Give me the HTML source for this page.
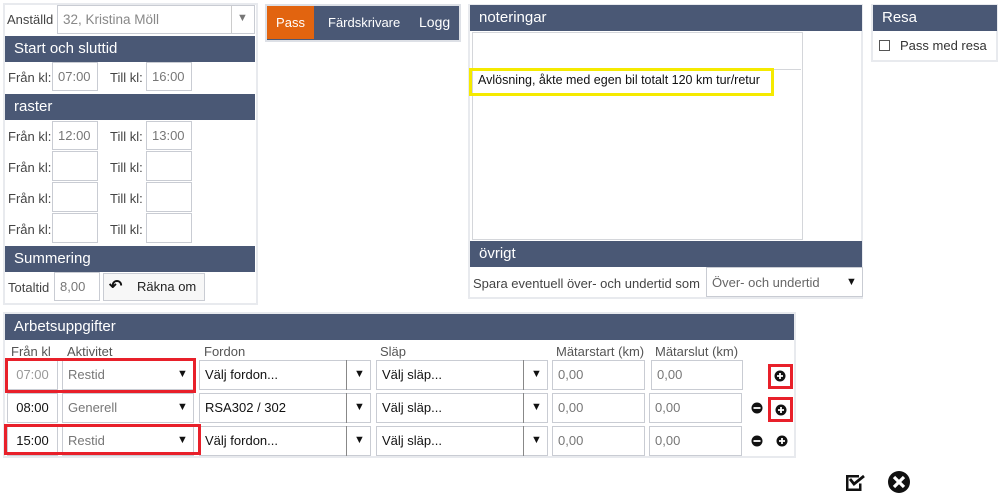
<!DOCTYPE html>
<html><head><meta charset="utf-8"><style>
*{box-sizing:border-box;margin:0;padding:0}
body{width:999px;height:498px;background:#fff;font-family:"Liberation Sans",sans-serif;font-size:13px;color:#333;position:relative;overflow:hidden}
.a{position:absolute}
.hd{position:absolute;background:#4a5875;color:#fff;font-size:15px;padding-left:9px;line-height:26px}
.pan{position:absolute;border:2px solid #e8eaee;background:#fff}
.in{position:absolute;border:1px solid #c9ccd3;background:#fff;color:#777;font-size:13px;line-height:28px;padding-left:5px}
.lb{position:absolute;font-size:13px;color:#444}
.sel{position:absolute;border:1px solid #c9ccd3;background:#fff;font-size:13px;padding-left:5px}
.ar{position:absolute;font-size:11px;color:#111}
.red{position:absolute;border:3px solid #e8202a}
</style></head><body>
<div class="pan" style="left:3px;top:3px;width:255px;height:302px"></div>
<div class="lb" style="left:7px;top:12px;font-size:13px">Anställd</div>
<div class="sel" style="left:57px;top:5px;width:198px;height:29px;line-height:28px;color:#888;font-size:13.5px">32, Kristina Möll</div>
<div class="a" style="left:231px;top:6px;width:1px;height:27px;background:#ccc"></div>
<div class="ar" style="left:237px;top:12px;color:#777">▼</div>
<div class="hd" style="left:5px;top:36px;width:250px">Start och sluttid</div>
<div class="lb" style="left:8px;top:70px">Från kl:</div><div class="in" style="left:52px;top:62px;width:46px;height:29px">07:00</div>
<div class="lb" style="left:110px;top:70px">Till kl:</div><div class="in" style="left:146px;top:62px;width:46px;height:29px">16:00</div>
<div class="hd" style="left:5px;top:94px;width:250px">raster</div>
<div class="lb" style="left:8px;top:129px">Från kl:</div><div class="in" style="left:52px;top:121px;width:46px;height:29px">12:00</div>
<div class="lb" style="left:110px;top:129px">Till kl:</div><div class="in" style="left:146px;top:121px;width:46px;height:29px">13:00</div>
<div class="lb" style="left:8px;top:160px">Från kl:</div><div class="in" style="left:52px;top:151px;width:46px;height:30px"></div>
<div class="lb" style="left:110px;top:160px">Till kl:</div><div class="in" style="left:146px;top:151px;width:46px;height:30px"></div>
<div class="lb" style="left:8px;top:191px">Från kl:</div><div class="in" style="left:52px;top:182px;width:46px;height:30px"></div>
<div class="lb" style="left:110px;top:191px">Till kl:</div><div class="in" style="left:146px;top:182px;width:46px;height:30px"></div>
<div class="lb" style="left:8px;top:222px">Från kl:</div><div class="in" style="left:52px;top:213px;width:46px;height:30px"></div>
<div class="lb" style="left:110px;top:222px">Till kl:</div><div class="in" style="left:146px;top:213px;width:46px;height:30px"></div>
<div class="hd" style="left:5px;top:246px;width:250px">Summering</div>
<div class="lb" style="left:8px;top:280px">Totaltid</div><div class="in" style="left:54px;top:272px;width:46px;height:29px">8,00</div>
<div class="a" style="left:103px;top:273px;width:102px;height:28px;border:1px solid #c9ccd3;background:#f7f7f7;line-height:26px;font-size:13px;color:#222;padding-left:33px">Räkna om</div>
<div class="a" style="left:109px;top:279px;font-size:16px;font-weight:bold;color:#111;line-height:16px">↶</div>
<div class="a" style="left:265px;top:4px;width:196px;height:38px;background:#4a5875;border:2px solid #dde0e6"></div>
<div class="a" style="left:267px;top:6px;width:47px;height:33px;background:#e2640f;color:#fff;line-height:33px;text-align:center">Pass</div>
<div class="a" style="left:328px;top:6px;line-height:33px;color:#fff">Färdskrivare</div>
<div class="a" style="left:419px;top:6px;line-height:33px;color:#fff;font-size:14px">Logg</div>
<div class="pan" style="left:468px;top:4px;width:395px;height:295px"></div>
<div class="hd" style="left:470px;top:5px;width:392px">noteringar</div>
<div class="a" style="left:472px;top:32px;width:331px;height:208px;border:1px solid #d4d6da"></div>
<div class="a" style="left:474px;top:34px;width:327px;height:36px;border-bottom:1px solid #d4d6da"></div>
<div class="a" style="left:469px;top:68px;width:305px;height:28px;border:3px solid #f5ea00"></div>
<div class="a" style="left:478px;top:73px;font-size:12.5px;color:#111">Avlösning, åkte med egen bil totalt 120 km tur/retur</div>
<div class="hd" style="left:470px;top:241px;width:392px">övrigt</div>
<div class="lb" style="left:473px;top:276px">Spara eventuell över- och undertid som</div>
<div class="sel" style="left:706px;top:267px;width:157px;height:30px;line-height:29px;color:#666">Över- och undertid</div>
<div class="ar" style="left:846px;top:276px">▼</div>
<div class="pan" style="left:871px;top:4px;width:127px;height:58px"></div>
<div class="hd" style="left:873px;top:5px;width:124px">Resa</div>
<div class="a" style="left:879px;top:40px;width:11px;height:11px;border:1.5px solid #555"></div>
<div class="lb" style="left:900px;top:38px;color:#333">Pass med resa</div>
<div class="pan" style="left:3px;top:312px;width:793px;height:146px"></div>
<div class="hd" style="left:5px;top:314px;width:789px">Arbetsuppgifter</div>
<div class="lb" style="left:11px;top:344px;color:#555">Från kl</div>
<div class="lb" style="left:67px;top:344px;color:#555">Aktivitet</div>
<div class="lb" style="left:204px;top:344px;color:#555">Fordon</div>
<div class="lb" style="left:380px;top:344px;color:#555">Släp</div>
<div class="lb" style="left:556px;top:344px;color:#555">Mätarstart (km)</div>
<div class="lb" style="left:655px;top:344px;color:#555">Mätarslut (km)</div>
<div class="in" style="left:7px;top:360px;width:51px;height:30px;text-align:center;padding:0;color:#999">07:00</div>
<div class="in" style="left:7px;top:393px;width:51px;height:30px;text-align:center;padding:0;color:#111">08:00</div>
<div class="in" style="left:7px;top:426px;width:51px;height:30px;text-align:center;padding:0;color:#111">15:00</div>
<div class="in" style="left:62px;top:360px;width:132px;height:30px">Restid</div><div class="ar" style="left:177px;top:368px">▼</div>
<div class="in" style="left:62px;top:393px;width:132px;height:30px">Generell</div><div class="ar" style="left:177px;top:401px">▼</div>
<div class="in" style="left:62px;top:426px;width:132px;height:30px">Restid</div><div class="ar" style="left:177px;top:434px">▼</div>
<div class="in" style="left:199px;top:360px;width:172px;height:30px;color:#111">Välj fordon...</div><div class="a" style="left:346px;top:360px;width:1px;height:30px;background:#888"></div><div class="ar" style="left:354px;top:368px">▼</div>
<div class="in" style="left:199px;top:393px;width:172px;height:30px;color:#111">RSA302 / 302</div><div class="a" style="left:346px;top:393px;width:1px;height:30px;background:#888"></div><div class="ar" style="left:354px;top:401px">▼</div>
<div class="in" style="left:199px;top:426px;width:172px;height:30px;color:#111">Välj fordon...</div><div class="a" style="left:346px;top:426px;width:1px;height:30px;background:#888"></div><div class="ar" style="left:354px;top:434px">▼</div>
<div class="in" style="left:376px;top:360px;width:172px;height:30px;color:#111">Välj släp...</div><div class="a" style="left:523px;top:360px;width:1px;height:30px;background:#888"></div><div class="ar" style="left:531px;top:368px">▼</div>
<div class="in" style="left:376px;top:393px;width:172px;height:30px;color:#111">Välj släp...</div><div class="a" style="left:523px;top:393px;width:1px;height:30px;background:#888"></div><div class="ar" style="left:531px;top:401px">▼</div>
<div class="in" style="left:376px;top:426px;width:172px;height:30px;color:#111">Välj släp...</div><div class="a" style="left:523px;top:426px;width:1px;height:30px;background:#888"></div><div class="ar" style="left:531px;top:434px">▼</div>
<div class="in" style="left:552px;top:360px;width:93px;height:30px">0,00</div>
<div class="in" style="left:552px;top:393px;width:93px;height:30px">0,00</div>
<div class="in" style="left:552px;top:426px;width:93px;height:30px">0,00</div>
<div class="in" style="left:651px;top:360px;width:92px;height:30px">0,00</div>
<div class="in" style="left:649px;top:393px;width:93px;height:30px">0,00</div>
<div class="in" style="left:649px;top:426px;width:93px;height:30px">0,00</div>
<svg class="a" style="left:0;top:0" width="999" height="498">
<g fill="#111">
<circle cx="780" cy="376" r="5.5"/><circle cx="781" cy="410" r="5.5"/><circle cx="782" cy="441" r="5.5"/>
<circle cx="757" cy="408" r="5.5"/><circle cx="757" cy="441" r="5.5"/>
</g>
<g stroke="#fff" stroke-width="1.8">
<path d="M777 376h6M780 373v6"/><path d="M778 410h6M781 407v6"/><path d="M779 441h6M782 438v6"/>
<path d="M753.5 408h7"/><path d="M753.5 441h7"/>
</g>
<path d="M846 475h13v2.5h-10.5v11h10.5v-5h2.5v7.5h-15.5z" fill="#111"/>
<path d="M850 479l4 5 10-8" stroke="#111" stroke-width="2.8" fill="none"/>
<circle cx="899" cy="482" r="11" fill="#111"/>
<path d="M894 477l10 10M904 477l-10 10" stroke="#fff" stroke-width="3.2"/>
</svg>
<div class="red" style="left:5px;top:358px;width:191px;height:35px"></div>
<div class="red" style="left:4px;top:424px;width:197px;height:31px"></div>
<div class="red" style="left:768px;top:364px;width:25px;height:25px"></div>
<div class="red" style="left:768px;top:397px;width:25px;height:25px"></div>
</body></html>
